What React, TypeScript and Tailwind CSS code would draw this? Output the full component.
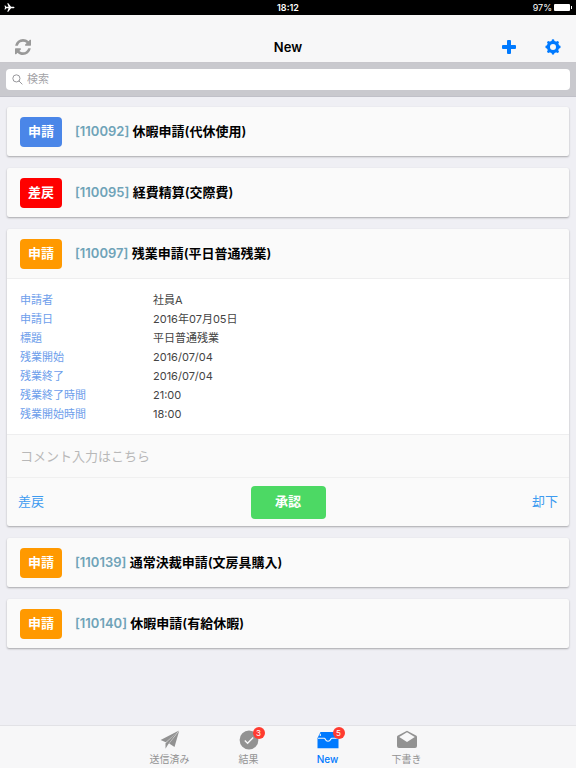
import React, { useState } from "react";

type Status = "new" | "returned" | "pending";

type Request = {
  id: string;
  title: string;
  label: string;
  status: Status;
  details?: [string, string][];
};

const statusColor: Record<Status, string> = {
  new: "bg-[#4a86e8]",
  returned: "bg-[#ff0000]",
  pending: "bg-[#ff9900]",
};

const requests: Request[] = [
  { id: "110092", title: "休暇申請(代休使用)", label: "申請", status: "new" },
  { id: "110095", title: "経費精算(交際費)", label: "差戻", status: "returned" },
  {
    id: "110097",
    title: "残業申請(平日普通残業)",
    label: "申請",
    status: "pending",
    details: [
      ["申請者", "社員A"],
      ["申請日", "2016年07月05日"],
      ["標題", "平日普通残業"],
      ["残業開始", "2016/07/04"],
      ["残業終了", "2016/07/04"],
      ["残業終了時間", "21:00"],
      ["残業開始時間", "18:00"],
    ],
  },
  { id: "110139", title: "通常決裁申請(文房具購入)", label: "申請", status: "pending" },
  { id: "110140", title: "休暇申請(有給休暇)", label: "申請", status: "pending" },
];

function PlaneIcon() {
  return (
    <svg viewBox="0 0 24 24" className="size-[11px]" fill="#fff" aria-hidden="true">
      <path d="M23 12c0 1.2-1.4 1.8-3 1.8h-4.600L9.500 21.500H7l3-7.700H5L3 16.500H1L2.300 12 1 7.500h2l2 2.700h5L7 2.500h2.500l5.900 7.700H20c1.600 0 3 .6 3 1.800z" />
    </svg>
  );
}

function RefreshIcon() {
  return (
    <svg viewBox="128 128 1536 1536" className="size-4" fill="currentColor" aria-hidden="true">
      <path d="M1639 1056q0 5-1 7-64 268-268 434.500t-478 166.500q-146 0-282.500-55t-243.500-157l-129 129q-19 19-45 19t-45-19-19-45v-448q0-26 19-45t45-19h448q26 0 45 19t19 45-19 45l-137 137q71 66 161 102t187 36q134 0 250-65t186-179q11-17 53-117 8-23 30-23h192q13 0 22.500 9.500t9.500 22.500zm25-800v448q0 26-19 45t-45 19h-448q-26 0-45-19t-19-45 19-45l138-138q-148-137-349-137-134 0-250 65t-186 179q-11 17-53 117-8 23-30 23h-199q-13 0-22.500-9.500t-9.500-22.500v-7q65-268 270-434.500t480-166.500q146 0 284 55.500t245 156.500l130-129q19-19 45-19t45 19 19 45z" />
    </svg>
  );
}

function PlusIcon() {
  return (
    <svg viewBox="0 0 14 14" className="size-[14px]" fill="currentColor" aria-hidden="true">
      <path d="M6 0h2a1 1 0 0 1 1 1v4h4a1 1 0 0 1 1 1v2a1 1 0 0 1-1 1H9v4a1 1 0 0 1-1 1H6a1 1 0 0 1-1-1V9H1a1 1 0 0 1-1-1V6a1 1 0 0 1 1-1h4V1a1 1 0 0 1 1-1z" />
    </svg>
  );
}

function GearIcon() {
  return (
    <svg viewBox="0 0 32 32" className="size-4" fill="none" stroke="currentColor" aria-hidden="true">
      <circle cx="16" cy="16" r="9.200" strokeWidth="6.400" />
      <path
        d="M16 5V3.500M16 27v1.500M5 16H3.500M27 16h1.500M8.200 8.200 7 7M23.800 8.200 25 7M8.200 23.800 7 25M23.800 23.800 25 25"
        strokeWidth="5.600"
        strokeLinecap="round"
      />
    </svg>
  );
}

function SearchIcon() {
  return (
    <svg viewBox="0 0 12 12" className="size-[11px] shrink-0" fill="none" stroke="#8e8e93" aria-hidden="true">
      <circle cx="4.800" cy="4.800" r="3.900" />
      <path d="M7.600 7.600 11 11" strokeLinecap="round" />
    </svg>
  );
}

function SentIcon() {
  return (
    <svg viewBox="0 0 20 20" className="size-5" fill="currentColor" aria-hidden="true">
      <path d="M19 .600.600 10l5.200 2.300zM19.200.800 9.200 13.500l5.300 3.600zM18.600.800 5.500 13.200v5.600l2.400-4z" />
    </svg>
  );
}

function ResultIcon() {
  return (
    <svg viewBox="0 0 20 20" className="size-5" aria-hidden="true">
      <circle cx="10" cy="10" r="9.400" fill="currentColor" />
      <path d="m5.800 10.400 2.800 2.800 5.600-5.800" fill="none" stroke="#f7f7f8" strokeWidth="1.400" />
    </svg>
  );
}

function InboxIcon() {
  return (
    <svg viewBox="0 0 22 20" className="h-5 w-[22px]" aria-hidden="true">
      <path d="M3.500 2h15L21.500 8v10.200h-21V8z" fill="currentColor" />
      <path d="M1 8.300h6.200c.8 0 .9.500 1.200 1.200.5 1.200 1.300 1.800 2.600 1.800s2.100-.600 2.600-1.800c.3-.700.4-1.200 1.200-1.200H21M3.300 6V3.800M18.700 6V3.800" fill="none" stroke="#f7f7f8" strokeWidth="1.100" />
    </svg>
  );
}

function DraftIcon() {
  return (
    <svg viewBox="0 0 20 20" className="size-5" aria-hidden="true">
      <path d="M10 .800 19 5.500c.6.300 1 .8 1 1.600v8.900a2 2 0 0 1-2 2H2a2 2 0 0 1-2-2V7.100c0-.8.400-1.300 1-1.600z" fill="currentColor" />
      <path d="m10 2.300 7.800 4.600L10 12 2.200 6.900z" fill="#f7f7f8" />
    </svg>
  );
}

const tabs = [
  { name: "送信済み", Icon: SentIcon },
  { name: "結果", Icon: ResultIcon, count: 3 },
  { name: "New", Icon: InboxIcon, count: 5 },
  { name: "下書き", Icon: DraftIcon },
];

function RequestCard({ request }: { request: Request }) {
  return (
    <article className="rounded-xs bg-[#fafafa] shadow-[0_1px_2px_rgba(0,0,0,0.3)]">
      <header className="flex h-[49px] items-center gap-[13px] px-[13px]">
        <span
          className={`flex h-[30px] w-[42px] shrink-0 items-center justify-center rounded text-[13px] font-bold text-white ${statusColor[request.status]}`}
        >
          {request.label}
        </span>
        <h2 className="text-[13px] font-semibold text-black">
          <span className="text-[#6fa3b8]">[{request.id}]</span> {request.title}
        </h2>
      </header>
      {request.details && (
        <>
          <dl className="grid grid-cols-[133px_1fr] border-y border-[#eeeeef] bg-white px-[13px] pt-3 pb-[10px] text-[11px] leading-[19px]">
            {request.details.map(([name, value]) => (
              <React.Fragment key={name}>
                <dt className="text-[#6d9eeb]">{name}</dt>
                <dd className="text-[#444444]">{value}</dd>
              </React.Fragment>
            ))}
          </dl>
          <input
            type="text"
            aria-label="コメント"
            placeholder="コメント入力はこちら"
            className="block h-[43px] w-full border-b border-[#f0f0f0] bg-transparent px-[13px] text-[13px] outline-none placeholder:text-[#b8b8b8]"
          />
          <footer className="flex h-12 items-center justify-between px-[11px] text-[13px]">
            <button type="button" className="flex-1 text-left text-[#3d9bf0]">差戻</button>
            <button type="button" className="h-[33px] w-[75px] rounded bg-[#4cd964] font-bold text-white">承認</button>
            <button type="button" className="flex-1 text-right text-[#3d9bf0]">却下</button>
          </footer>
        </>
      )}
    </article>
  );
}

export default function App() {
  const [active, setActive] = useState("New");

  return (
    <div lang="ja" className="flex min-h-screen flex-col bg-[#efeff4] font-[Inter,'Noto_Sans_CJK_JP',sans-serif]">
      <div className="grid h-[15px] grid-cols-3 items-center bg-black px-1 text-[9px] leading-[15px] text-white">
        <PlaneIcon />
        <span className="text-center font-semibold">18:12</span>
        <span className="flex items-center justify-end gap-[2px]">
          97%
          <span className="flex items-center">
            <span className="h-[7px] w-4 rounded-[1px] bg-white" />
            <span className="ml-px h-[3px] w-px bg-white" />
          </span>
        </span>
      </div>

      <header className="grid h-12 grid-cols-3 items-center border-b border-[#c8c7cc] bg-[#f7f7f8] px-[15px] pt-4">
        <button type="button" aria-label="更新" className="justify-self-start text-[#999999]">
          <RefreshIcon />
        </button>
        <h1 className="text-center text-[13px] leading-4 font-semibold text-black">New</h1>
        <div className="flex items-center justify-end gap-[29px] text-[#007aff]">
          <button type="button" aria-label="追加"><PlusIcon /></button>
          <button type="button" aria-label="設定"><GearIcon /></button>
        </div>
      </header>

      <div className="border-b border-[#c0c0c8] bg-[#c9c9ce] px-[6px] py-[6px]">
        <label className="flex h-[21px] items-center gap-1 rounded bg-white px-[6px]">
          <SearchIcon />
          <input
            type="search"
            aria-label="検索"
            placeholder="検索"
            className="w-full bg-transparent text-[11px] outline-none placeholder:text-[#a3a3a8]"
          />
        </label>
      </div>

      <main className="flex flex-1 flex-col gap-3 px-[7px] py-[10px]">
        {requests.map((request) => (
          <RequestCard key={request.id} request={request} />
        ))}
      </main>

      <nav className="sticky bottom-0 flex h-[43px] justify-center border-t border-[#e2e2e6] bg-[#f7f7f8]">
        {tabs.map(({ name, Icon, count }) => (
          <button
            key={name}
            type="button"
            onClick={() => setActive(name)}
            className={`flex w-[79px] flex-col items-center gap-[2px] pt-1 text-[10px] leading-[14px] ${
              active === name ? "font-medium text-[#007aff]" : "text-[#929292]"
            }`}
          >
            <span className="relative">
              <Icon />
              {count && (
                <span className="absolute -top-[3px] -right-[6px] flex size-3 items-center justify-center rounded-full bg-[#ff3b30] text-[8px] font-normal text-white">
                  {count}
                </span>
              )}
            </span>
            {name}
          </button>
        ))}
      </nav>
    </div>
  );
}
